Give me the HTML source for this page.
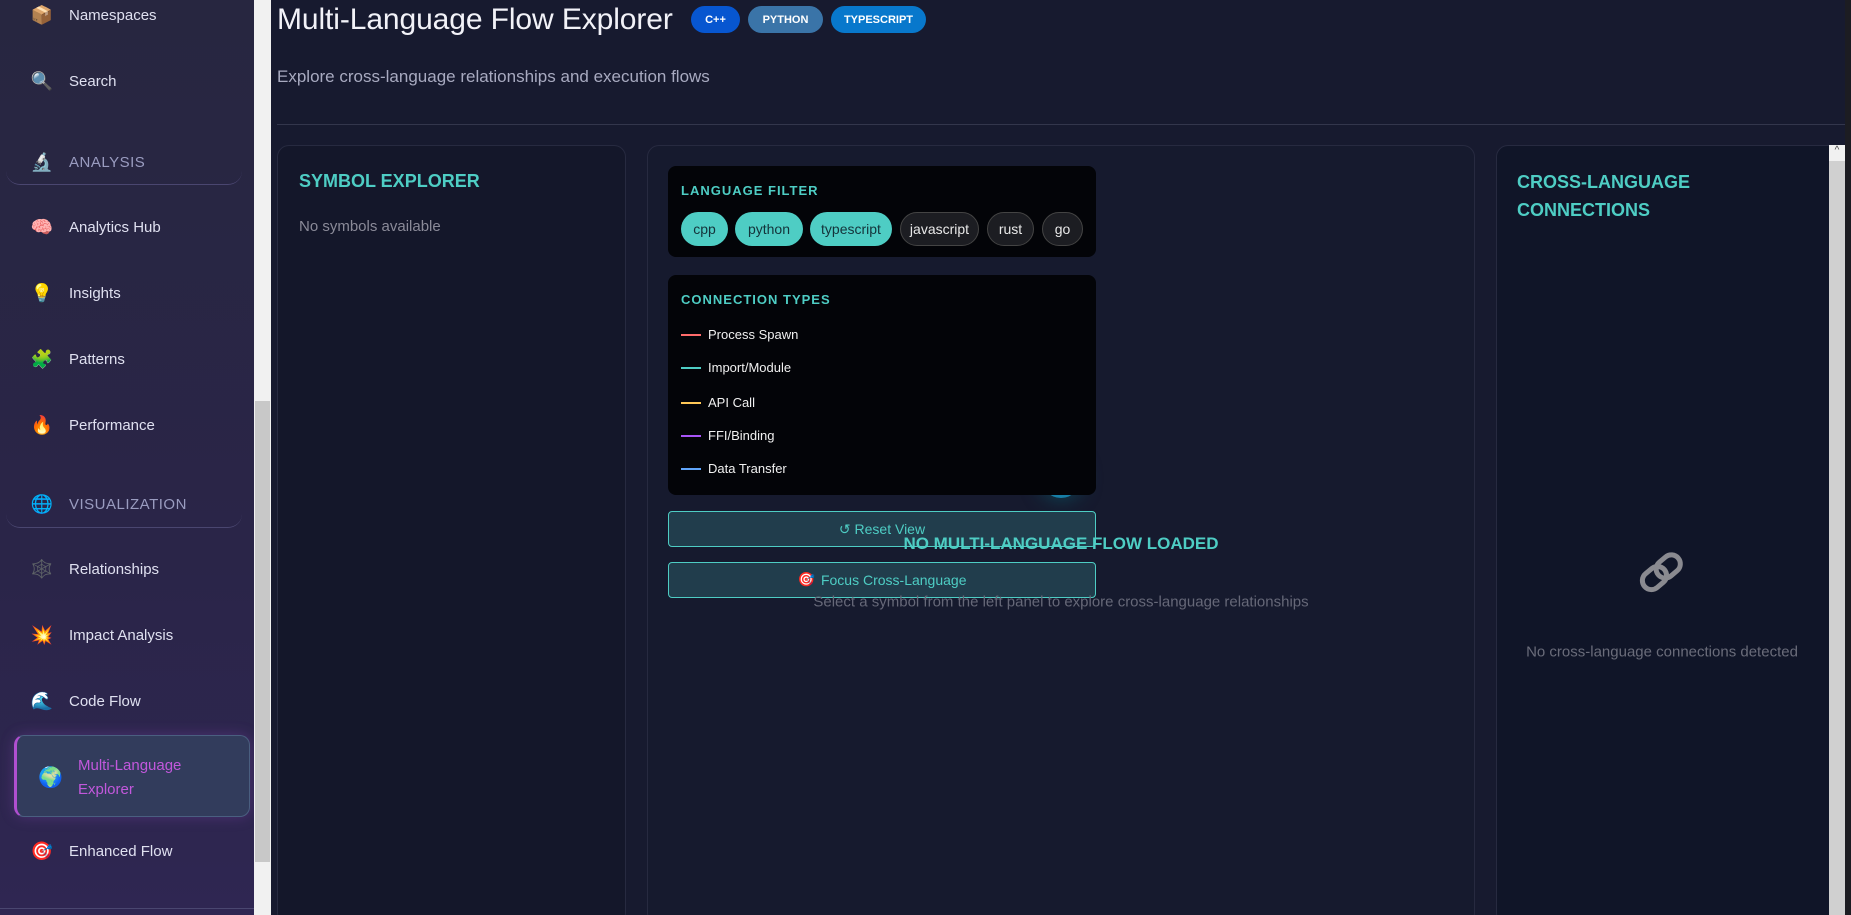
<!DOCTYPE html>
<html style="width:1851px;height:915px;overflow:hidden"><head><meta charset="utf-8"><style>
*{box-sizing:border-box;margin:0;padding:0}
body{width:1851px;height:915px;overflow:hidden;background:#171a2f;font-family:"Liberation Sans",sans-serif;position:relative}
.abs{position:absolute}
#sb{left:0;top:0;width:254px;height:915px;background:linear-gradient(180deg,#272640 0%,#2a2548 60%,#2f2652 100%)}
.it{position:absolute;left:0;width:254px;height:30px;display:flex;align-items:center;color:#dfe0f0;font-size:15px}
.it .ic{width:26px;margin-left:29px;margin-right:14px;font-size:18px;text-align:center;font-family:"Noto Color Emoji","DejaVu Sans",sans-serif}
.sec{color:#9a9cc0;letter-spacing:.5px}
.secline{position:absolute;left:6px;width:236px;height:14px;border-bottom:1px solid #4a4670;border-radius:0 0 14px 14px}
#sbs{left:254px;top:0;width:17px;height:915px;background:#f1f1f1}
.chip{position:absolute;top:212px;height:34px;border-radius:17px;font-size:14px;display:flex;align-items:center;justify-content:center}
.on{background:#4ecdc4;color:#14333a}
.off{background:#1c1d22;border:1px solid #444;color:#e8e8e8}
.ct{position:absolute;left:681px;font-size:13px;color:#f0f0f0;display:flex;align-items:center}
.ct i{display:inline-block;width:20px;height:2px;margin-right:7px}
.btn{position:absolute;left:668px;width:428px;height:36px;background:#213d4c;border:1px solid #4ecdc4;border-radius:4px;color:#4ecdc4;font-size:14px;display:flex;align-items:center;justify-content:center}
h3{font-size:18px;color:#4ecdc4;font-weight:bold}
</style></head><body>
<div id="sb" class="abs">
<div class="it" style="top:0"><span class="ic">📦</span>Namespaces</div>
<div class="it" style="top:66px"><span class="ic">🔍</span>Search</div>
<div class="it sec" style="top:147px"><span class="ic">🔬</span>ANALYSIS</div>
<div class="secline" style="top:171px"></div>
<div class="it" style="top:212px"><span class="ic">🧠</span>Analytics Hub</div>
<div class="it" style="top:278px"><span class="ic">💡</span>Insights</div>
<div class="it" style="top:344px"><span class="ic">🧩</span>Patterns</div>
<div class="it" style="top:410px"><span class="ic">🔥</span>Performance</div>
<div class="it sec" style="top:489px"><span class="ic">🌐</span>VISUALIZATION</div>
<div class="secline" style="top:514px"></div>
<div class="it" style="top:554px"><span class="ic">🕸️</span>Relationships</div>
<div class="it" style="top:620px"><span class="ic">💥</span>Impact Analysis</div>
<div class="it" style="top:686px"><span class="ic">🌊</span>Code Flow</div>
<div class="abs" style="left:14px;top:735px;width:236px;height:82px;background:#323c5c;border:1px solid #4a5f80;border-left:3px solid #b04fd0;border-radius:10px;box-shadow:0 0 14px rgba(150,80,200,.3)"></div>
<div class="abs" style="left:38px;top:765px;font-size:20px;font-family:'Noto Color Emoji','DejaVu Sans',sans-serif">🌍</div>
<div class="abs" style="left:78px;top:754px;color:#c258dc;font-size:15px;line-height:24px">Multi-Language<br>Explorer</div>
<div class="it" style="top:836px"><span class="ic">🎯</span>Enhanced Flow</div>
<div class="abs" style="left:0;top:908px;width:254px;border-top:1px solid #4a4670"></div>
</div>
<div id="sbs" class="abs"><div class="abs" style="left:1px;top:401px;width:15px;height:461px;background:#c8c8c8"></div></div>

<div class="abs" style="left:277px;top:3px;font-size:30px;letter-spacing:-0.1px;color:#f2f2f8;font-weight:300;white-space:nowrap">Multi-Language Flow Explorer</div>
<div class="abs" style="left:691px;top:6px;width:49px;height:27px;border-radius:14px;background:#0756d0;color:#fff;font-size:11px;font-weight:bold;display:flex;align-items:center;justify-content:center">C++</div>
<div class="abs" style="left:748px;top:6px;width:75px;height:27px;border-radius:14px;background:#3a74a8;color:#fff;font-size:11px;font-weight:bold;display:flex;align-items:center;justify-content:center">PYTHON</div>
<div class="abs" style="left:831px;top:6px;width:95px;height:27px;border-radius:14px;background:#0878cc;color:#fff;font-size:11px;font-weight:bold;display:flex;align-items:center;justify-content:center">TYPESCRIPT</div>
<div class="abs" style="left:277px;top:67px;font-size:17px;color:#a8aac0">Explore cross-language relationships and execution flows</div>
<div class="abs" style="left:277px;top:124px;width:1568px;border-top:1px solid #33364c"></div>

<div class="abs" style="left:277px;top:145px;width:349px;height:780px;background:#14172a;border:1px solid #272a40;border-radius:12px"></div>
<h3 class="abs" style="left:299px;top:171px">SYMBOL EXPLORER</h3>
<div class="abs" style="left:299px;top:218px;font-size:15px;color:#8a8a98">No symbols available</div>

<div class="abs" style="left:647px;top:145px;width:828px;height:780px;background:#161a2e;border:1px solid #272a40;border-radius:12px"></div>
<div class="abs" style="left:1041px;top:458px;width:40px;height:40px;border-radius:50%;background:#177ea6;box-shadow:0 0 20px #0c4d5c"></div>
<div class="abs" style="left:668px;top:166px;width:428px;height:91px;background:#030408;border-radius:8px"></div>
<div class="abs" style="left:681px;top:183px;font-size:13px;font-weight:bold;color:#4ecdc4;letter-spacing:1px">LANGUAGE FILTER</div>
<div class="chip on" style="left:681px;width:47px">cpp</div>
<div class="chip on" style="left:735px;width:68px">python</div>
<div class="chip on" style="left:810px;width:82px">typescript</div>
<div class="chip off" style="left:900px;width:79px">javascript</div>
<div class="chip off" style="left:987px;width:47px">rust</div>
<div class="chip off" style="left:1042px;width:41px">go</div>
<div class="abs" style="left:668px;top:275px;width:428px;height:220px;background:#030408;border-radius:8px"></div>
<div class="abs" style="left:681px;top:292px;font-size:13px;font-weight:bold;color:#4ecdc4;letter-spacing:1px">CONNECTION TYPES</div>
<div class="ct" style="top:327px"><i style="background:#ff6b6b"></i>Process Spawn</div>
<div class="ct" style="top:360px"><i style="background:#4ecdc4"></i>Import/Module</div>
<div class="ct" style="top:395px"><i style="background:#ffc857"></i>API Call</div>
<div class="ct" style="top:428px"><i style="background:#a855f7"></i>FFI/Binding</div>
<div class="ct" style="top:461px"><i style="background:#60a5fa"></i>Data Transfer</div>
<div class="btn" style="top:511px">↺ Reset View</div>
<div class="btn" style="top:562px"><span style="font-family:'Noto Color Emoji','DejaVu Sans',sans-serif;margin-right:6px">🎯</span>Focus Cross-Language</div>
<div class="abs" style="left:1061px;top:544px;transform:translate(-50%,-50%);white-space:nowrap;font-size:17px;font-weight:bold;color:#4ecdc4">NO MULTI-LANGUAGE FLOW LOADED</div>
<div class="abs" style="left:1061px;top:602px;transform:translate(-50%,-50%);white-space:nowrap;font-size:15px;color:#666878">Select a symbol from the left panel to explore cross-language relationships</div>

<div class="abs" style="left:1496px;top:145px;width:360px;height:780px;background:#101528;border:1px solid #272a40;border-radius:12px"></div>
<h3 class="abs" style="left:1517px;top:168px;line-height:28px">CROSS-LANGUAGE<br>CONNECTIONS</h3>
<svg class="abs" style="left:1636px;top:547px" width="52" height="52" viewBox="0 0 52 52"><g fill="none" stroke="#8a8a90" stroke-width="5" transform="rotate(-40 26 26)"><rect x="4" y="16" width="26" height="18" rx="9"/><rect x="22" y="16" width="26" height="18" rx="9"/></g></svg>
<div class="abs" style="left:1662px;top:652px;transform:translate(-50%,-50%);white-space:nowrap;font-size:15px;color:#6a6c7a">No cross-language connections detected</div>
<div class="abs" style="left:1829px;top:145px;width:16px;height:770px;background:#d0d0d0"><div style="height:16px;background:#f1f1f1;color:#444;font-size:10px;text-align:center">^</div></div>
<div class="abs" style="left:1845px;top:0;width:6px;height:915px;background:#1c1c22"></div>
</body></html>
